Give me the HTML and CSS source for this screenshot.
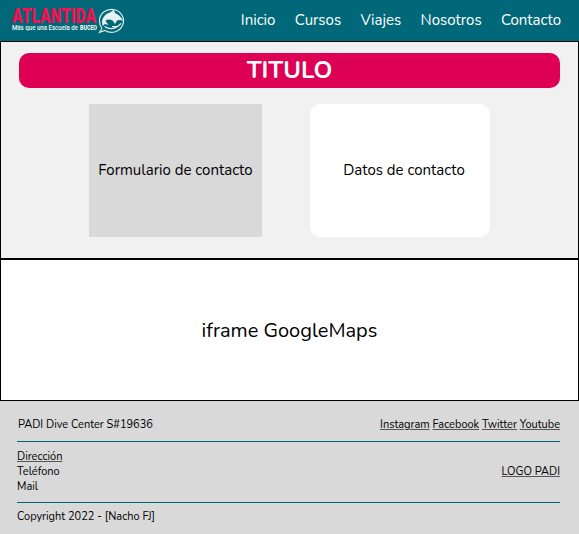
FILE: index.html
```html
<!DOCTYPE html>
<html lang="es">
<head>
<meta charset="utf-8">
<title>Atlantida - Contacto</title>
<link rel="stylesheet" href="styles.css">
</head>
<body>
<header class="header">
  <svg class="logo" width="116" height="30" viewBox="0 0 116 30" role="img" aria-label="Atlantida">
    <text class="logo-name" x="1" y="18.500" textLength="84" lengthAdjust="spacingAndGlyphs">ATLANTIDA</text>
    <text class="logo-line" x="1" y="26" textLength="66" lengthAdjust="spacingAndGlyphs">Más que una Escuela de</text>
    <text class="logo-line logo-strong" x="69" y="26" textLength="17" lengthAdjust="spacingAndGlyphs">BUCEO</text>
    <path d="M91 24.500 L88.500 28.300 L94 26.500 A12 11.500 0 1 0 88.500 17 Q88.500 21 91 24.500" fill="none" stroke="#d5e8eb" stroke-width="1.200"/>
    <path d="M91 17 Q93 9.500 99 8.500 L103 5.500 L104 9 Q109 11 112.500 17 Q109 15.500 106 16.500 L104 20 L101.500 16.500 Q97 14.500 94.500 17 L97.500 21 L94 20 L91.500 22Z" fill="#e4f0f2"/>
    <path d="M93.500 22.500 Q102 28 110 19.500 Q107 23.500 101 22.500" fill="none" stroke="#e4f0f2" stroke-width="1.200"/>
  </svg>
  <nav class="nav">
    <a>Inicio</a><a>Cursos</a><a>Viajes</a><a>Nosotros</a><a>Contacto</a>
  </nav>
</header>
<main>
  <section class="contact">
    <h1 class="title">TITULO</h1>
    <div class="cards">
      <div class="card form"><span>Formulario de contacto</span></div>
      <div class="card data"><span>Datos de contacto</span></div>
    </div>
  </section>
  <section class="map"><span>iframe GoogleMaps</span></section>
</main>
<footer class="footer">
  <div class="row top">
    <span class="center-id">PADI Dive Center S#19636</span>
    <div class="social"><a>Instagram</a> <a>Facebook</a> <a>Twitter</a> <a>Youtube</a></div>
  </div>
  <div class="row info">
    <div><a>Dirección</a><br>Teléfono<br>Mail</div>
    <a class="padi">LOGO PADI</a>
  </div>
  <div class="copy">Copyright 2022 - [Nacho FJ]</div>
</footer>
</body>
</html>
```
FILE: styles.css
```css
* { box-sizing: border-box; }
body { margin: 0; font-family: Nunito, Lato, sans-serif; color: #000; background: #d9d9d9; }
.header { height: 41px; background: #006878; display: flex; justify-content: space-between; padding: 4px 18px 0 11px; }
.logo { display: block; overflow: visible; }
.logo-name { font: 900 20.500px Roboto, sans-serif; fill: #f5104f; }
.logo-line { font: 500 8px Roboto, sans-serif; fill: #f2f8f9; }
.logo-strong { font-weight: 900; }
.nav { display: flex; gap: 19.300px; color: #fff; font-size: 15px; line-height: 20px; padding-top: 6px; }
.contact { height: 218px; border: 1px solid #000; background: #f1f1f1; padding: 11px 18px 0; }
.title { margin: 0; height: 35px; line-height: 34px; border-radius: 10px; background: #dd0054; color: #fff; text-align: center; font-size: 24px; font-weight: 700; }
.cards { display: flex; justify-content: center; gap: 48px; margin-top: 16px; }
.card { height: 133px; display: flex; align-items: center; justify-content: center; font-size: 15px; padding-bottom: 2px; }
.form { width: 173px; background: #d9d9d9; }
.data { width: 180px; background: #fff; border-radius: 10px; padding-left: 8px; }
.map { height: 142px; border: 1px solid #000; background: #fff; display: flex; align-items: center; justify-content: center; font-size: 20px; }
.footer { height: 133px; padding: 0 19px 0 17px; font-size: 11px; line-height: 15px; }
.footer a { text-decoration: underline; text-decoration-color: #555; text-decoration-thickness: 1px; text-underline-offset: 1px; }
.row { display: flex; justify-content: space-between; border-bottom: 1px solid #006878; }
.top { height: 41px; padding-top: 16px; }
.center-id { padding-left: 1px; }
.info { height: 61px; align-items: center; padding-bottom: 2px; }
.copy { padding-top: 6px; }
```
